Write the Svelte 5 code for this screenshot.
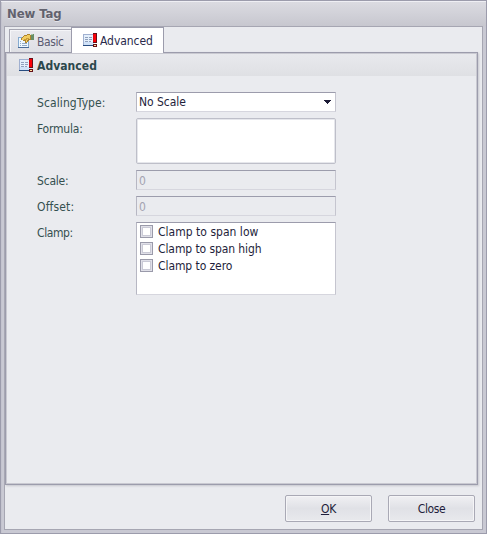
<script>
  let scaling = $state('No Scale');
  let formula = $state('');
  const clampOptions = [
    { text: 'Clamp to span low', spacing: 0.02 },
    { text: 'Clamp to span high', spacing: -0.09 },
    { text: 'Clamp to zero', spacing: -0.08 }
  ];
</script>

{#snippet advancedIcon()}
  <svg class="icon" width="16" height="16" viewBox="0 0 16 16" shape-rendering="crispEdges">
    <path d="M1 1h11v12H1z" fill="#a0b0d0" />
    <path d="M1 12h13v1H1z" fill="#274c80" />
    <path d="M2 2h10v10H2z" fill="#e4effb" />
    <path d="M2 9h10v3H2z" fill="#d0e2f8" />
    <path d="M3 4h3v1H3zM3 6h3v1H3zM3 8h3v1H3zM7 4h3v1H7zM7 6h3v1H7zM7 8h2v1H7z" fill="#8fa0bc" />
    <path d="M11 0h4v10h-4zM11 11h4v3h-4z" fill="#651019" />
    <path d="M11 1h3v8h-3z" fill="#fb0008" />
    <path d="M11 1h1v8h-1z" fill="#d90710" />
    <path d="M12 12h2v1h-2z" fill="#ffe2a0" />
  </svg>
{/snippet}

<div class="window">
  <header class="titlebar"><span class="t title">New Tag</span></header>
  <main class="client">
    <nav class="tabs">
      <div class="tab basic">
        <svg class="icon" width="16" height="16" viewBox="0 0 16 16" shape-rendering="crispEdges">
          <path d="M0 3h11v11H0z" fill="#86abd0" />
          <path d="M1 4h9v9H1z" fill="#edf7ff" />
          <path d="M0 13h11v1H0z" fill="#486b98" />
          <path d="M2 7h1v1H2zM2 9h1v1H2zM2 11h1v1H2zM4 9h5v1H4zM4 11h5v1H4z" fill="#91a9c5" />
          <path d="M3 4h1V3h1V2h1V1h3V0h3v1h2v5h-3v1h-1v1H9v1H7V7H5V6H3z" fill="#ae842c" />
          <path d="M4 4h1V3h1V2h3V1h3v4h-2v1H9v2H8V6H4z" fill="#f1cc60" />
          <path d="M8 4h3v1H8zM6 5h3v1H6z" fill="#ca9d36" />
          <path d="M13 0h3v6h-3z" fill="#688e67" />
          <path d="M13 0h2v1h-2z" fill="#a6c6a1" />
        </svg>
        <span class="t basic-text">Basic</span>
      </div>
      <div class="tab active">{@render advancedIcon()}<span class="t adv-text">Advanced</span></div>
    </nav>
    <section class="panel">
      <h1>{@render advancedIcon()}<span class="t heading">Advanced</span></h1>
      <div class="form">
        <div class="row combo-row">
          <span class="t label scaling">ScalingType:</span>
          <div class="field combo"><span class="t noscale">{scaling}</span>
            <svg width="7" height="4" viewBox="0 0 7 4" shape-rendering="crispEdges"><path d="M0 0h7v1H6v1H5v1H4v1H3V3H2V2H1V1H0z" fill="#1c1b36" /></svg>
          </div>
        </div>
        <div class="row formula-row">
          <span class="t label">Formula:</span>
          <textarea bind:value={formula} aria-label="Formula"></textarea>
        </div>
        <div class="row scale-row"><span class="t label">Scale:</span><div class="field disabled"><span class="t">0</span></div></div>
        <div class="row offset-row"><span class="t label offset">Offset:</span><div class="field disabled"><span class="t">0</span></div></div>
        <div class="row">
          <span class="t label clamp">Clamp:</span>
          <div class="field list">
            {#each clampOptions as option}
              <div class="option"><span class="box"></span><span class="t" style:letter-spacing="{option.spacing}px">{option.text}</span></div>
            {/each}
          </div>
        </div>
      </div>
    </section>
    <footer>
      <button><span class="t ok"><u>O</u>K</span></button>
      <button><span class="t close">Close</span></button>
    </footer>
  </main>
</div>

<style>
  * { box-sizing: border-box; }
  .window {
    width: 487px; height: 534px; padding: 0 3px 3px;
    border: 1px solid #9c9cac;
    box-shadow: inset 0 1px #efeff4, inset 1px 0 #c4c4cf;
    font: 12px/14px "DejaVu Sans Condensed", "DejaVu Sans", sans-serif;
    font-stretch: condensed;
    color: #1e1e3b;
    background: linear-gradient(#dcdce2, #c7c7cf 25px, #c9c9d3 26px);
  }
  .t { white-space: pre; line-height: 14px; letter-spacing: -0.2px; }
  .titlebar { height: 25px; padding: 6px 3px; }
  .title { display: block; font-size: 13px; font-weight: bold; letter-spacing: -0.1px; color: #62626e; text-shadow: 0 1px #e4e4ea; }
  .client { height: 504px; border: 1px solid #a6a6b2; background: #eaebef; display: flex; flex-direction: column; }
  .tabs { height: 25px; flex: none; display: flex; align-items: flex-end; padding-left: 4px; z-index: 1; }
  .tab { display: flex; align-items: flex-start; }
  .icon { display: block; flex: none; }
  .basic { width: 62px; height: 23px; padding: 4px 0 0 8px; border: 1px solid #a5a5b1; border-right: 0; border-bottom: 0; background: linear-gradient(#e9e9ee, #dfe0e5); box-shadow: inset 1px 1px #f5f5f8; color: #5a5a70; }
  .basic-text { margin: 1px 0 0 3px; letter-spacing: -0.4px; }
  .active { width: 93px; height: 26px; margin-bottom: -1px; padding: 5px 0 0 10px; border: 1px solid #9c9cac; border-bottom: 0; background: #fff; color: #29294b; }
  .adv-text { margin: 1px 0 0 2px; letter-spacing: -0.05px; }
  .panel { flex: none; width: 473px; height: 433px; border: 1px solid #9c9cac; box-shadow: inset 0 0 0 1px #c9c9d1, 1px 1px 2px #c6c6ce; padding: 1px; }
  h1 { margin: 0; height: 22px; padding: 4px 0 0 11px; display: flex; font-size: 12px; background: linear-gradient(#e8e9ed, #dfe0e4); }
  .heading { margin: 1px 0 0 3px; letter-spacing: 0.05px; color: #2b474b; }
  .form { padding: 16px 0 0 30px; }
  .row { display: flex; align-items: flex-start; }
  .label { width: 99px; padding-top: 4px; color: #35504f; }
  .scaling { letter-spacing: 0.1px; }
  .offset { letter-spacing: 0.15px; }
  .clamp { letter-spacing: -0.4px; }
  .combo-row, .scale-row, .offset-row { height: 26px; }
  .formula-row { height: 52px; }
  .field { width: 200px; height: 20px; background: #fff; border: 1px solid; border-color: #9c9cac #c5c5cf #d6d6de #b7b7c3; padding: 3px 2px; }
  .combo { display: flex; align-items: center; justify-content: space-between; padding: 0 4px 0 2px; }
  .noscale { letter-spacing: -0.05px; }
  .disabled { background: #eaebef; color: #a3a3b1; }
  textarea { display: block; width: 200px; height: 46px; border: 1px solid #bebfc9; border-radius: 2px; background: #fff; padding: 2px; resize: none; outline: none; box-shadow: inset 0 0 0 1px #e6e7ec; }
  .list { height: 73px; padding: 0 3px; }
  .option { display: flex; align-items: center; height: 17px; }
  .box { width: 13px; height: 13px; border: 1px solid #9a9aaa; background: #fff; box-shadow: inset 0 0 0 1px #e0e0e8, inset 0 0 0 2px #cacad6; margin-right: 5px; }
  footer { display: flex; justify-content: flex-end; gap: 16px; padding: 10px 7px 0 0; }
  button { width: 87px; height: 27px; border: 1px solid #a9a9b5; border-radius: 2px; background: linear-gradient(#f0f0f3, #e0e1e6 50%, #e8e9ed); box-shadow: inset 0 0 0 1px #f5f5f7; padding: 0; font: inherit; color: #1e1e3b; }
  .close { letter-spacing: -0.4px; }
</style>
